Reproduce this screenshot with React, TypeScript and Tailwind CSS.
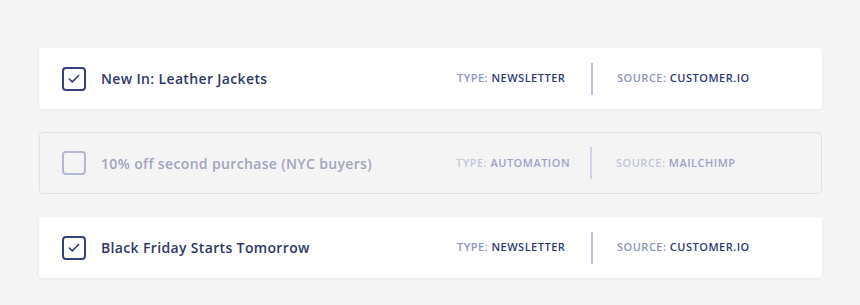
import { Check } from "lucide-react";

type Campaign = {
  title: string;
  type: string;
  source: string;
  active: boolean;
};

const campaigns: Campaign[] = [
  { title: "New In: Leather Jackets", type: "Newsletter", source: "Customer.io", active: true },
  { title: "10% off second purchase (NYC buyers)", type: "Automation", source: "Mailchimp", active: false },
  { title: "Black Friday Starts Tomorrow", type: "Newsletter", source: "Customer.io", active: true },
];

const CampaignRow = ({ c }: { c: Campaign }) => {
  return (
    <div
      className={
        c.active
          ? "flex items-center h-[61px] rounded-[4px] bg-white shadow-[0_1px_4px_rgba(0,0,0,0.06)] pl-[23px]"
          : "flex items-center h-[62px] rounded-[4px] bg-[#f4f4f5] border border-[#e2e2e4] pl-[22px]"
      }
    >
      <div
        className={
          c.active
            ? "w-6 h-6 rounded-[4px] border-2 border-[#35407a] flex items-center justify-center"
            : "w-6 h-6 rounded-[4px] border-2 border-[#b3b8d3]"
        }
      >
        {c.active && <Check className="w-3.5 h-3.5 text-[#35407a]" strokeWidth={2.75} />}
      </div>
      <div
        className={
          c.active
            ? "flex-1 ml-[15px] text-[14px] font-semibold tracking-[0.025em] text-[#2f3866]"
            : "flex-1 ml-[15px] text-[14px] font-semibold tracking-[0.025em] text-[#a2a6bd]"
        }
      >
        {c.title}
      </div>
      <div className="w-[134px] text-[11px] font-semibold uppercase tracking-[0.045em]">
        <span className={c.active ? "text-[#8d95bb]" : "text-[#c3c7da]"}>Type: </span>
        <span className={c.active ? "text-[#2e3a78]" : "text-[#9ea4c4]"}>{c.type}</span>
      </div>
      <div className={c.active ? "w-[2px] h-8 bg-[#b9c2e0]" : "w-[2px] h-8 bg-[#cfd4e6]"} />
      <div className="w-[229px] pl-6 text-[11px] font-semibold uppercase tracking-[0.045em]">
        <span className={c.active ? "text-[#8d95bb]" : "text-[#c3c7da]"}>Source: </span>
        <span className={c.active ? "text-[#2e3a78]" : "text-[#9ea4c4]"}>{c.source}</span>
      </div>
    </div>
  );
};

export default function App() {
  return (
    <div
      className="w-[860px] h-[305px] bg-[#f5f5f5] pt-[48px] pl-[39px] pr-[38px]"
      style={{ fontFamily: '"Open Sans", "Noto Sans", sans-serif' }}
    >
      <div className="flex flex-col gap-[23px]">
        {campaigns.map((c) => (
          <CampaignRow key={c.title} c={c} />
        ))}
      </div>
    </div>
  );
}
